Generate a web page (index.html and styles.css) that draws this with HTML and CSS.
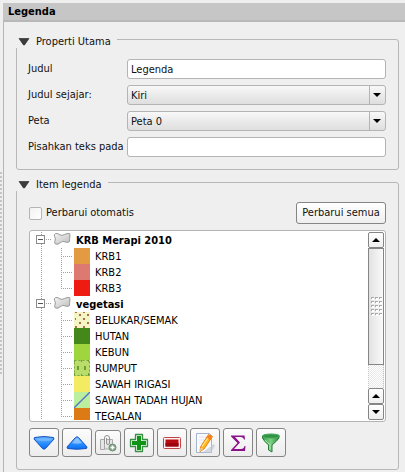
FILE: index.html
```html
<!DOCTYPE html>
<html lang="id">
<head>
<meta charset="utf-8">
<title>Legenda</title>
<link rel="stylesheet" href="styles.css">
</head>
<body>
<div class="dock">
  <div class="splitter"></div>
  <main class="panel">
    <h1 class="title">Legenda</h1>
    <div class="content">
      <fieldset class="group">
        <legend class="legend"><svg class="fold" width="12" height="8" viewBox="0 0 12 8"><path d="M1 .5h10L6.500 7h-1z" fill="#3c3c3c" stroke="#222" stroke-width=".6"/></svg>Properti Utama</legend>
        <div class="form">
          <label for="judul">Judul</label>
          <input class="field" id="judul" type="text" value="Legenda">
          <label for="sejajar">Judul sejajar:</label>
          <div class="combo"><select class="field" id="sejajar"><option>Kiri</option></select></div>
          <label for="peta">Peta</label>
          <div class="combo"><select class="field" id="peta"><option>Peta 0</option></select></div>
          <label for="pisah">Pisahkan teks pada</label>
          <input class="field" id="pisah" type="text">
        </div>
      </fieldset>

      <fieldset class="group items">
        <legend class="legend"><svg class="fold" width="12" height="8" viewBox="0 0 12 8"><path d="M1 .5h10L6.500 7h-1z" fill="#3c3c3c" stroke="#222" stroke-width=".6"/></svg>Item legenda</legend>
        <div class="update">
          <label class="check"><input type="checkbox">Perbarui otomatis</label>
          <button class="push" type="button">Perbarui semua</button>
        </div>
        <div class="treebox">
          <ul class="tree">
            <li class="layer">
              <div class="row"><span class="expander"></span><svg class="poly" width="18" height="14" viewBox="0 0 18 14"><use href="#polygon"/></svg><b>KRB Merapi 2010</b></div>
              <ul class="symbols">
                <li><span class="swatch krb1"></span>KRB1</li>
                <li><span class="swatch krb2"></span>KRB2</li>
                <li><span class="swatch krb3"></span>KRB3</li>
              </ul>
            </li>
            <li class="layer">
              <div class="row"><span class="expander"></span><svg class="poly" width="18" height="14" viewBox="0 0 18 14"><use href="#polygon"/></svg><b>vegetasi</b></div>
              <ul class="symbols">
                <li><svg class="swatch" viewBox="0 0 16 16"><path fill="#f4f4c6" d="M0 0h16v16H0z"/><path fill="#a5743f" d="M1 0h2v1H1zM9 0h2v1H9zM5 2h2v2H5zM13 2h2v2h-2zM1 6h1v2H1zM9 6h2v2H9zM5 10h2v2H5zM13 10h2v2h-2zM1 14h2v2H1zM9 14h2v2H9z"/></svg>BELUKAR/SEMAK</li>
                <li><span class="swatch hutan"></span>HUTAN</li>
                <li><span class="swatch kebun"></span>KEBUN</li>
                <li><svg class="swatch" viewBox="0 0 16 16"><path fill="#b9dc6b" d="M0 0h16v16H0z"/><path fill="#699f35" d="M0 0h1v2H0zM7 0h1v2H7zM14 0h1v2h-1zM3 6h2v4H3zM10 6h2v4h-2zM0 13h1v3H0zM7 14h1v2H7zM14 13h1v3h-1z"/><path d="M.5.5h15v15H.5z" fill="none" stroke="#78a541" stroke-dasharray="2 2"/></svg>RUMPUT</li>
                <li><span class="swatch irigasi"></span>SAWAH IRIGASI</li>
                <li><svg class="swatch" viewBox="0 0 16 16"><path fill="#bbef9d" d="M0 0h16v16H0z"/><path d="M0 16L16 0" stroke="#526fca" stroke-width="1.300"/></svg>SAWAH TADAH HUJAN</li>
                <li><span class="swatch tegalan"></span>TEGALAN</li>
              </ul>
            </li>
          </ul>
          <div class="scroll">
            <button class="arrow up" type="button" aria-label="Gulir ke atas"></button>
            <div class="thumb"><svg width="11" height="20" viewBox="0 0 11 20"><defs><pattern id="grip" width="4" height="4" patternUnits="userSpaceOnUse"><path d="M0 2V0h3v1H1v1z" fill="#aaa"/><path d="M1 1h2v2H1z" fill="#fff"/></pattern></defs><path d="M0 0h11v20H0z" fill="url(#grip)"/></svg></div>
            <div class="track"></div>
            <button class="arrow up" type="button" aria-label="Naik"></button>
            <button class="arrow down" type="button" aria-label="Turun"></button>
          </div>
        </div>
        <div class="tools">
          <button class="tool" type="button" aria-label="Pindah ke bawah"><svg width="22" height="22" viewBox="0 0 22 22"><path d="M1.500 5.500Q11 3.500 20.500 5.500L21 7 12.500 16.500Q11 17.800 9.500 16.500L1 7z" fill="url(#blue)" stroke="#1453bd"/><path d="M3 6.500h16L17.500 8.500Q11 10 4.500 8.500z" fill="#a8d4ff" opacity=".4"/></svg></button>
          <button class="tool" type="button" aria-label="Pindah ke atas"><svg width="22" height="22" viewBox="0 0 22 22"><path d="M1.500 16.500Q11 18 20.500 16.500L21 15 12.500 5.500Q11 4 9.500 5.500L1 15z" fill="url(#blue)" stroke="#1453bd"/><path d="M10 6.500Q11 5.500 12 6.500L16 11Q11 12.500 6 11z" fill="#b4dbff" opacity=".6"/></svg></button>
          <button class="tool small" type="button" aria-label="Tambah grup"><svg width="18" height="18" viewBox="0 0 18 18"><path d="M1.500 5.500h4v10h-4zM8 5.500h5.500V15H5.500" fill="#e5e5e5" stroke="#a9a9a9"/><path d="M5.500 10V4q0-2.500 2.500-2.500T10.500 4v5q0 1.500-1.500 1.500T7.500 9V4" fill="none" stroke="#929292"/><circle cx="13.500" cy="13.500" r="3.500" fill="#7fa488" stroke="#6e9377"/><path d="M13.500 11.500v4M11.500 13.500h4" stroke="#fff" stroke-width="1.500"/></svg></button>
          <button class="tool" type="button" aria-label="Tambah item"><svg width="22" height="22" viewBox="0 0 22 22"><path d="M7.500 2.500h7v5h5v7h-5v5h-7v-5h-5v-7h5z" fill="#e8f6e8" stroke="#389044" stroke-width="1.300" stroke-linejoin="round"/><path d="M9 4h4v5h5v4h-5v5H9v-5H4V9h5z" fill="#119316"/></svg></button>
          <button class="tool" type="button" aria-label="Hapus item"><svg width="22" height="22" viewBox="0 0 22 22"><rect x="2.500" y="5.500" width="17" height="11" rx="1" fill="#fff1f1" stroke="#bd4545"/><path d="M4.500 7.500h13v7h-13z" fill="#b90b12"/><path d="M4.500 11h13v3.500h-13z" fill="#9c060c"/></svg></button>
          <button class="tool" type="button" aria-label="Sunting item"><svg width="22" height="22" viewBox="0 0 22 22"><path d="M2.500 1.500h13l2 2v17h-15z" fill="#fafbff" stroke="#a5b3cf"/><path d="M8 20.500L20 12l1 2-4 6.500z" fill="#c2c9d4" opacity=".7"/><path d="M5 5h7M5 8h5M5 11h4" stroke="#dde3ee"/><path d="M14.500 2.500l4 2L10 17l-4 2.500L6.500 15z" fill="#ffb71c" stroke="#ec7d13"/><path d="M15 3l3 1.500-2 3.500-3.500-2z" fill="#f6811c"/><path d="M8 14.500L14 6" stroke="#ffe78a" stroke-width="1.300"/><path d="M6.500 15.500l3 1.500L6 19.500z" fill="#e5cb9b"/></svg></button>
          <button class="tool" type="button" aria-label="Tampilkan jumlah"><svg width="22" height="22" viewBox="0 0 22 22"><path d="M4 3.500h13.500l.500 4h-1q-.5-2.500-3-2.500H8l5 5.500-6 6.500h7q3 0 3.500-3h1l-.5 5H4v-1l6.500-7L4 4.500z" fill="#8b118b"/></svg></button>
          <button class="tool" type="button" aria-label="Saring legenda"><svg width="22" height="22" viewBox="0 0 22 22"><path d="M2.500 4v2q1 2.500 6 7v5l3.500 2v-7q5.500-4.500 7-7V4z" fill="url(#green)" stroke="#2c7d3a"/><ellipse cx="11" cy="4" rx="8.500" ry="2" fill="#2e9444" stroke="#48a75a"/><path d="M5 8q2 2.500 5 4.500v5" fill="none" stroke="#b0e8b2"/></svg></button>
        </div>
      </fieldset>
    </div>
  </main>
</div>
<svg class="defs" width="0" height="0" aria-hidden="true">
  <defs>
    <linearGradient id="grey" x1="0" y1="0" x2="1" y2="1"><stop offset="0" stop-color="#f4f4f4"/><stop offset="1" stop-color="#bdbdbd"/></linearGradient>
    <linearGradient id="blue" x1="0" y1="0" x2="0" y2="1"><stop offset="0" stop-color="#67b2ff"/><stop offset=".6" stop-color="#258bff"/><stop offset="1" stop-color="#0b6cf0"/></linearGradient>
    <linearGradient id="green"><stop offset="0" stop-color="#3aa34d"/><stop offset=".5" stop-color="#7bd083"/><stop offset="1" stop-color="#2f8d40"/></linearGradient>
    <path id="polygon" d="M2.500 1.500Q5 1 7 3q2 1 4.500-.5 3-1.500 5-1 .8 1 .3 4-.3 2-.3 4-1.500 1.500-4 .5-3-1.500-5 .5-2.500 2.500-5 1.500-1.500-1-.5-3.500Q3 6 1.500 4.500.8 2.500 2.500 1.500z" fill="url(#grey)" stroke="#969696"/>
  </defs>
</svg>
</body>
</html>
```
FILE: styles.css
```css
* { box-sizing: border-box; }

body {
  margin: 0;
  background: #efefef;
  color: #111;
  font: 11px/16px "DejaVu Sans Condensed", "DejaVu Sans", sans-serif;
}

button, input, select { font: inherit; color: inherit; margin: 0; }
ul { list-style: none; margin: 0; padding: 0; }
svg { display: block; flex: none; }
.defs { position: absolute; }

.dock { display: flex; min-height: 100vh; padding-top: 3px; }

.splitter {
  width: 3px;
  height: 204px;
  margin-top: 169px;
  background: radial-gradient(circle at 1px 1px, #c4c4c4 1px, transparent 1px) 0 0 / 3px 4px;
}

.panel { flex: 1; display: flex; flex-direction: column; min-width: 0; }

.title {
  margin: 0;
  padding: 1px 5px;
  height: 19px;
  background: #c6c6c6;
  border-bottom: 2px solid #b8b8b8;
  font-size: 11px;
  color: #000;
}

.content {
  flex: 1;
  padding: 8px 6px 2px 12px;
  border-left: 1px solid #b5b5b5;
}

.group {
  margin: 0;
  padding: 11px 12px 12px;
  border: 1px solid #b7b7b7;
  border-radius: 3px;
  min-width: 0;
}
.items { margin-top: 3px; }

.legend {
  display: flex;
  align-items: center;
  gap: 6px;
  height: 18px;
  margin-left: -13px;
  padding: 6px 6px 0 2px;
  background: #efefef;
}

.form {
  display: grid;
  grid-template-columns: 92px 1fr;
  column-gap: 6px;
  row-gap: 6px;
  align-items: center;
  white-space: nowrap;
}
.form label { margin-left: -1px; }

.field {
  display: block;
  width: 100%;
  height: 20px;
  padding: 1px 3px 0;
  border: 1px solid #b4b4b4;
  border-radius: 3px;
  background: #fff;
  outline: none;
}

.combo { position: relative; }
.combo .field {
  appearance: none;
  background: linear-gradient(#f8f8f8, #dedede);
}
.combo::before {
  content: "";
  position: absolute;
  top: 1px;
  bottom: 1px;
  right: 16px;
  border-left: 1px solid #b4b4b4;
}
.combo::after {
  content: "";
  position: absolute;
  top: 8px;
  right: 5px;
  border: 4px solid transparent;
  border-top-color: #000;
  border-bottom: 0;
}

.update { display: flex; align-items: center; justify-content: space-between; }
.check { display: flex; align-items: center; gap: 4px; }
.check input {
  appearance: none;
  width: 13px;
  height: 13px;
  border: 1px solid #b4b4b4;
  border-radius: 2px;
  background: linear-gradient(135deg, #f2f2f2, #fff);
}
.push {
  height: 22px;
  padding: 0 5px;
  min-width: 90px;
  border: 1px solid #858585;
  border-radius: 3px;
  background: linear-gradient(#fff, #efefef);
  white-space: nowrap;
}

.treebox {
  display: flex;
  height: 192px;
  margin-top: 6px;
  padding: 1px;
  border: 1px solid #b4b4b4;
  border-radius: 3px;
  background: #fff;
}
.tree { flex: 1; overflow: hidden; padding-left: 5px; color: #000; line-height: 18px; white-space: nowrap; }
.layer { background: repeating-linear-gradient(#a0a0a0 0 1px, transparent 1px 2px) 5px 0 / 1px 100% no-repeat; }
.row {
  display: flex;
  height: 16px;
  background: repeating-linear-gradient(90deg, #a0a0a0 0 1px, transparent 1px 2px) 10px 7px / 6px 1px no-repeat;
}
.row b { margin-left: 5px; }
.expander {
  width: 9px;
  height: 9px;
  margin: 3px 8px 0 0;
  border: 1px solid #8a8a8a;
  background: linear-gradient(#555, #555) center / 5px 1px no-repeat #fff;
}
.symbols { padding-left: 25px; }
.symbols li {
  display: flex;
  gap: 5px;
  height: 16px;
  padding-left: 13px;
  background:
    repeating-linear-gradient(#a0a0a0 0 1px, transparent 1px 2px) 0 0 / 1px 100% no-repeat,
    repeating-linear-gradient(90deg, #a0a0a0 0 1px, transparent 1px 2px) 0 8px / 11px 1px no-repeat;
}
.symbols li:last-child { background-size: 1px 8px, 11px 1px; }
.swatch { width: 16px; height: 16px; }
.krb1 { background: #e39a41; }
.krb2 { background: #dc7a72; }
.krb3 { background: #ee1b13; }
.hutan { background: #438819; }
.kebun { background: #9fd63e; }
.irigasi { background: #f3eb62; }
.tegalan { background: #dc7a15; }

.scroll { display: flex; flex-direction: column; width: 16px; }
.arrow {
  display: flex;
  align-items: center;
  justify-content: center;
  height: 16px;
  padding: 0;
  border: 1px solid #858585;
  border-radius: 2px;
  background: linear-gradient(#fff, #eee);
}
.arrow::before { content: ""; border: 4px solid transparent; }
.up::before { border-bottom-color: #000; border-top: 0; }
.down::before { border-top-color: #000; border-bottom: 0; }
.thumb {
  flex: 117;
  display: flex;
  align-items: center;
  justify-content: center;
  border: 1px solid #858585;
  background: linear-gradient(90deg, #e2e2e2, #fafafa);
}
.track {
  flex: 23;
  border: dotted #c4c4c4;
  border-width: 0 1px;
  background: repeating-conic-gradient(#e9e9e9 0 25%, #fff 0 50%) 0 0 / 2px 2px;
}

.tools { display: flex; align-items: center; gap: 3px; margin-top: 6px; }
.tool {
  display: flex;
  align-items: center;
  justify-content: center;
  width: 30px;
  height: 29px;
  padding: 0;
  border: 1px solid #858585;
  border-radius: 3px;
  background: linear-gradient(#fcfcfc, #ececec);
}
.small { width: 26px; height: 25px; }
```
